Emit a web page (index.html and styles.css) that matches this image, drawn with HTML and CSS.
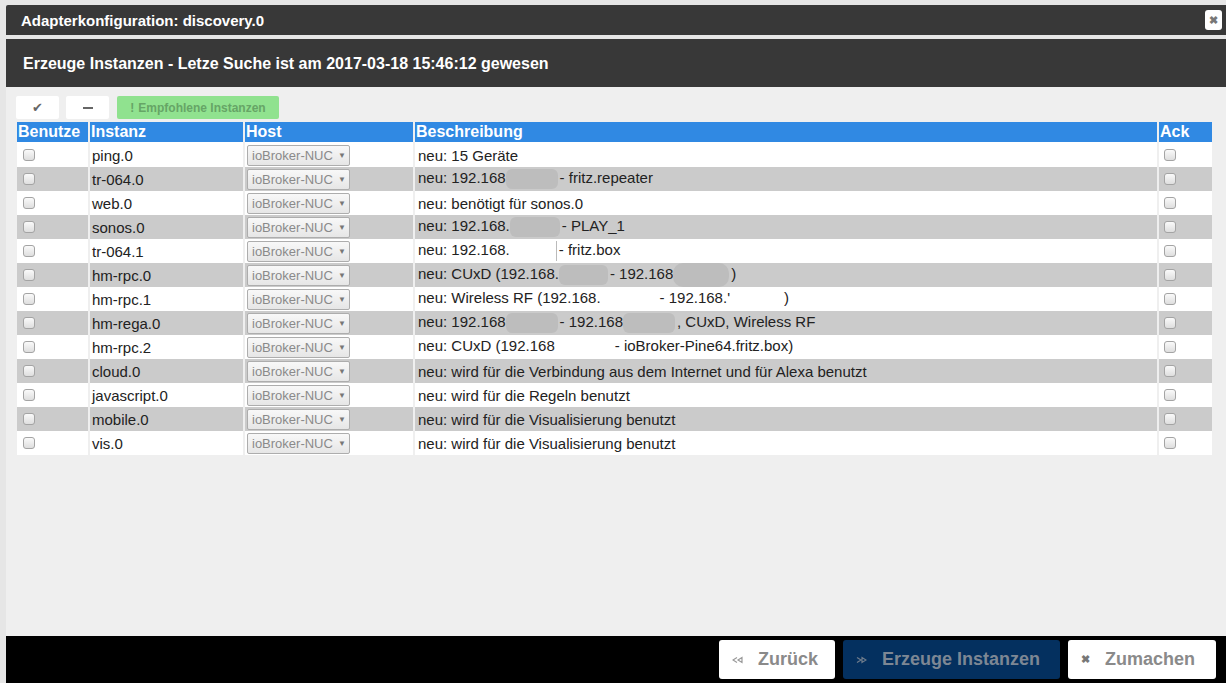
FILE: index.html
```html
<!DOCTYPE html>
<html lang="de">
<head>
    <meta charset="UTF-8">
    <title>Adapterkonfiguration: discovery.0</title>
    <link rel="stylesheet" href="styles.css">
</head>
<body>
    <div class="dialog">
        <div class="titlebar">
            <span>Adapterkonfiguration: discovery.0</span>
            <a href="#" class="close-x">&#10006;</a>
        </div>
        <div class="headline">Erzeuge Instanzen - Letze Suche ist am 2017-03-18 15:46:12 gewesen</div>

        <div class="content">
            <div class="toolbar">
                <a href="#" class="tool-btn">&#10004;</a>
                <a href="#" class="tool-btn"><span class="dash"></span></a>
                <a href="#" class="tool-btn green"><b>!</b> Empfohlene Instanzen</a>
            </div>

            <table class="grid">
                <colgroup>
                    <col class="c-use">
                    <col class="c-inst">
                    <col class="c-host">
                    <col class="c-desc">
                    <col class="c-ack">
                </colgroup>
                <thead>
                    <tr>
                        <th>Benutze</th>
                        <th>Instanz</th>
                        <th>Host</th>
                        <th>Beschreibung</th>
                        <th>Ack</th>
                    </tr>
                </thead>
                <tbody>
                    <tr>
                        <td><span class="chk"></span></td>
                        <td>ping.0</td>
                        <td><span class="sel">ioBroker-NUC <i>&#9660;</i></span></td>
                        <td>neu: 15 Geräte</td>
                        <td><span class="chk"></span></td>
                    </tr>
                    <tr>
                        <td><span class="chk"></span></td>
                        <td>tr-064.0</td>
                        <td><span class="sel">ioBroker-NUC <i>&#9660;</i></span></td>
                        <td>neu: 192.168<span class="mask w52"></span>- fritz.repeater</td>
                        <td><span class="chk"></span></td>
                    </tr>
                    <tr>
                        <td><span class="chk"></span></td>
                        <td>web.0</td>
                        <td><span class="sel">ioBroker-NUC <i>&#9660;</i></span></td>
                        <td>neu: benötigt für sonos.0</td>
                        <td><span class="chk"></span></td>
                    </tr>
                    <tr>
                        <td><span class="chk"></span></td>
                        <td>sonos.0</td>
                        <td><span class="sel">ioBroker-NUC <i>&#9660;</i></span></td>
                        <td>neu: 192.168.<span class="mask w50"></span>- PLAY_1</td>
                        <td><span class="chk"></span></td>
                    </tr>
                    <tr>
                        <td><span class="chk"></span></td>
                        <td>tr-064.1</td>
                        <td><span class="sel">ioBroker-NUC <i>&#9660;</i></span></td>
                        <td>neu: 192.168.<span class="blank w47 bar"></span>- fritz.box</td>
                        <td><span class="chk"></span></td>
                    </tr>
                    <tr>
                        <td><span class="chk"></span></td>
                        <td>hm-rpc.0</td>
                        <td><span class="sel">ioBroker-NUC <i>&#9660;</i></span></td>
                        <td>neu: CUxD (192.168.<span class="mask w49"></span>- 192.168<span class="mask w56 tall"></span>)</td>
                        <td><span class="chk"></span></td>
                    </tr>
                    <tr>
                        <td><span class="chk"></span></td>
                        <td>hm-rpc.1</td>
                        <td><span class="sel">ioBroker-NUC <i>&#9660;</i></span></td>
                        <td>neu: Wireless RF (192.168.<span class="blank w57"></span>- 192.168.'<span class="blank w52"></span>)</td>
                        <td><span class="chk"></span></td>
                    </tr>
                    <tr>
                        <td><span class="chk"></span></td>
                        <td>hm-rega.0</td>
                        <td><span class="sel">ioBroker-NUC <i>&#9660;</i></span></td>
                        <td>neu: 192.168<span class="mask w52"></span>- 192.168<span class="mask w52"></span>, CUxD, Wireless RF</td>
                        <td><span class="chk"></span></td>
                    </tr>
                    <tr>
                        <td><span class="chk"></span></td>
                        <td>hm-rpc.2</td>
                        <td><span class="sel">ioBroker-NUC <i>&#9660;</i></span></td>
                        <td>neu: CUxD (192.168<span class="blank w58"></span>- ioBroker-Pine64.fritz.box)</td>
                        <td><span class="chk"></span></td>
                    </tr>
                    <tr>
                        <td><span class="chk"></span></td>
                        <td>cloud.0</td>
                        <td><span class="sel">ioBroker-NUC <i>&#9660;</i></span></td>
                        <td>neu: wird für die Verbindung aus dem Internet und für Alexa benutzt</td>
                        <td><span class="chk"></span></td>
                    </tr>
                    <tr>
                        <td><span class="chk"></span></td>
                        <td>javascript.0</td>
                        <td><span class="sel">ioBroker-NUC <i>&#9660;</i></span></td>
                        <td>neu: wird für die Regeln benutzt</td>
                        <td><span class="chk"></span></td>
                    </tr>
                    <tr>
                        <td><span class="chk"></span></td>
                        <td>mobile.0</td>
                        <td><span class="sel">ioBroker-NUC <i>&#9660;</i></span></td>
                        <td>neu: wird für die Visualisierung benutzt</td>
                        <td><span class="chk"></span></td>
                    </tr>
                    <tr>
                        <td><span class="chk"></span></td>
                        <td>vis.0</td>
                        <td><span class="sel">ioBroker-NUC <i>&#9660;</i></span></td>
                        <td>neu: wird für die Visualisierung benutzt</td>
                        <td><span class="chk"></span></td>
                    </tr>
                </tbody>
            </table>
        </div>

        <div class="footer">
            <a href="#" class="foot-btn">
                <svg width="11" height="8" viewBox="0 0 11 8"><path d="M5 1.5L1 4l4 2.5M10 1.5L6 4l4 2.5z" fill="none" stroke="#999" stroke-width="1.2"/></svg>
                Zurück
            </a>
            <a href="#" class="foot-btn dark">
                <svg width="11" height="8" viewBox="0 0 11 8"><path d="M1 1.5L5 4l-4 2.5M6 1.5L10 4l-4 2.5z" fill="none" stroke="#6f7c8c" stroke-width="1.2"/></svg>
                Erzeuge Instanzen
            </a>
            <a href="#" class="foot-btn">
                <span class="x">&#10006;</span>
                Zumachen
            </a>
        </div>
    </div>
</body>
</html>
```

FILE: styles.css
```css
* {
    margin: 0;
    padding: 0;
    box-sizing: border-box;
}
body {
    width: 1226px;
    height: 683px;
    overflow: hidden;
    background-color: #e6e6e6;
    font-family: "Liberation Sans", Arial, sans-serif;
    color: #222;
}
a {
    text-decoration: none;
}
.dialog {
    margin-left: 6px;
    padding-top: 5px;
    height: 683px;
    display: flex;
    flex-direction: column;
}
.titlebar {
    height: 30px;
    background-color: #383838;
    color: #fff;
    font-weight: bold;
    font-size: 15px;
    display: flex;
    align-items: center;
    justify-content: space-between;
    padding-left: 15px;
    padding-right: 4px;
    border-radius: 2px 0 0 0;
}
.close-x {
    width: 17px;
    height: 20px;
    background-color: #fff;
    border-radius: 3px;
    color: #777;
    font-size: 11px;
    display: flex;
    align-items: center;
    justify-content: center;
}
.headline {
    margin-top: 4px;
    height: 48px;
    background-color: #383838;
    color: #fff;
    font-weight: bold;
    font-size: 16px;
    display: flex;
    align-items: center;
    padding-left: 17px;
    padding-top: 2px;
}
.content {
    flex: 1;
    background-color: #efefef;
    padding: 9px 0 0 10px;
}
.toolbar {
    display: flex;
    gap: 7px;
    height: 23px;
}
.tool-btn {
    width: 43px;
    background-color: #fff;
    color: #666;
    font-size: 13px;
    display: flex;
    align-items: center;
    justify-content: center;
    border-radius: 2px;
}
.dash {
    width: 10px;
    height: 2px;
    background-color: #666;
}
.tool-btn.green {
    width: 162px;
    margin-left: 1px;
    background-color: #90e28f;
    color: #66a566;
    font-weight: bold;
    font-size: 12px;
    gap: 4px;
}
.grid {
    margin-left: -1px;
    margin-top: 3px;
    width: 1199px;
    table-layout: fixed;
    border-collapse: separate;
    border-spacing: 2px 0;
    font-size: 15px;
}
.c-use { width: 71px; }
.c-inst { width: 153px; }
.c-host { width: 168px; }
.c-desc { width: 742px; }
.c-ack { width: 53px; }
.grid th {
    height: 21px;
    background-color: #3089e3;
    color: #fff;
    font-size: 16px;
    text-align: left;
    padding-left: 1px;
    vertical-align: middle;
    border-bottom: 1px solid #fff;
}
.grid td {
    height: 24px;
    padding-left: 2px;
    background-color: #fff;
    white-space: nowrap;
    vertical-align: middle;
}
.grid td:nth-child(4) {
    padding-left: 3px;
}
.grid tbody tr:nth-child(even) td {
    background-color: #cbcbcb;
}
.grid td:first-child {
    padding-left: 6px;
}
.grid td:last-child {
    padding-left: 5px;
}
.chk {
    display: block;
    width: 12px;
    height: 12px;
    border: 1px solid #a4a4a4;
    border-radius: 3px;
    background: linear-gradient(#fafafa, #dedede);
}
.sel {
    display: inline-flex;
    align-items: center;
    gap: 5px;
    width: 103px;
    height: 21px;
    padding-left: 4px;
    border: 1px solid #adadad;
    border-radius: 2px;
    background: linear-gradient(#f8f8f8, #e6e6e6);
    color: #8a8a8a;
    font-size: 13px;
}
.sel i {
    font-style: normal;
    font-size: 8px;
    color: #777;
}
.mask,
.blank {
    display: inline-block;
    height: 20px;
    vertical-align: middle;
    margin-right: 2px;
}
.mask {
    background-color: #bdbdbd;
    border-radius: 6px;
}
.mask.tall {
    height: 24px;
    border-radius: 10px;
}
.blank.bar {
    border-right: 1px solid #bbb;
}
.w47 { width: 47px; }
.w49 { width: 49px; }
.w50 { width: 50px; }
.w52 { width: 52px; }
.w56 { width: 56px; }
.w57 { width: 57px; }
.w58 { width: 58px; }
.footer {
    height: 47px;
    background-color: #000;
    display: flex;
    justify-content: flex-end;
    align-items: center;
    gap: 8px;
    padding-right: 10px;
}
.foot-btn {
    height: 39px;
    display: flex;
    align-items: center;
    gap: 15px;
    padding: 0 17px 0 13px;
    background-color: #fff;
    border-radius: 3px;
    color: #8a8a8a;
    font-weight: bold;
    font-size: 18px;
}
.foot-btn:first-child {
    width: 116px;
}
.foot-btn.dark {
    width: 217px;
    background-color: #04305f;
    color: #7d8794;
}
.foot-btn:last-child {
    width: 148px;
}
.foot-btn .x {
    font-size: 11px;
    color: #777;
}
```
